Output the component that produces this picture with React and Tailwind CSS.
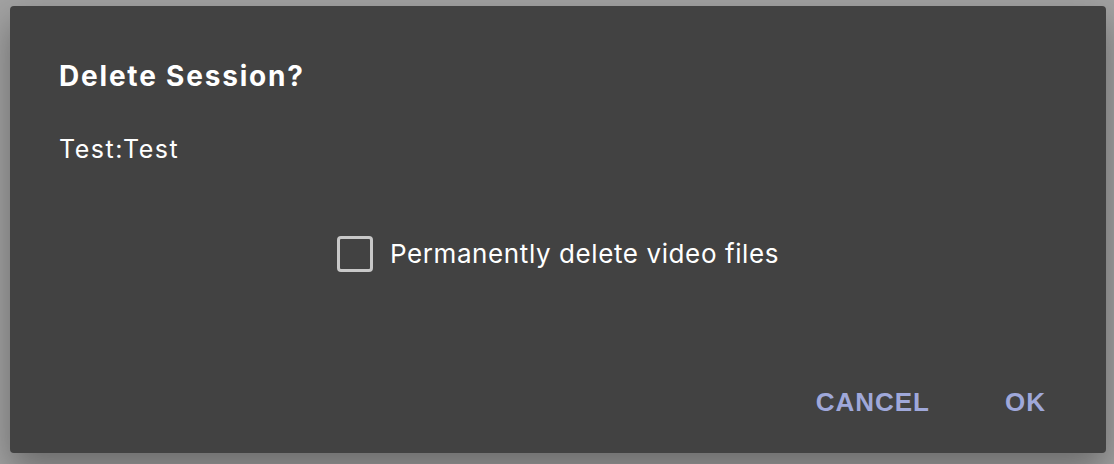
import React, { useState } from 'react';

const App = () => {
  const [checked, setChecked] = useState(false);

  return (
    <div className="w-[1114px] h-[464px] bg-[#a2a2a2] pt-[6px] pl-[10px] overflow-hidden">
      {/* Dialog */}
      <div
        className="w-[1096px] h-[447px] bg-[#424242] rounded-[4px] shadow-[0_16px_36px_rgba(0,0,0,0.35)] flex flex-col text-white"
        style={{ fontFamily: 'Inter, "Noto Sans", sans-serif' }}
      >
        {/* Title */}
        <h2 className="pl-[49px] pt-[50px] text-[28px] font-bold leading-[40px] tracking-[1.8px]">
          Delete Session?
        </h2>

        {/* Content */}
        <div className="pl-[49px] pt-[35px] text-[25px] leading-[36px] tracking-[1.5px]">Test:Test</div>

        <label className="mt-[69px] flex items-center justify-center gap-[17px] cursor-pointer">
          <button
            type="button"
            onClick={() => setChecked(!checked)}
            className="w-[36px] h-[36px] rounded-[4px] border-[3px] border-[#c8c8c8]"
          />
          <span className="text-[26px] leading-[36px] tracking-[0.6px]">Permanently delete video files</span>
        </label>

        {/* Actions */}
        <div
          className="mt-auto mb-[24px] mr-[48px] flex justify-end gap-[63px]"
          style={{ fontFamily: '"Liberation Sans", Arial, sans-serif' }}
        >
          <button className="h-[54px] text-[#9fa8da] text-[26px] font-bold uppercase tracking-[1px]">
            Cancel
          </button>
          <button className="px-[12px] h-[54px] text-[#9fa8da] text-[26px] font-bold uppercase tracking-[1px]">
            OK
          </button>
        </div>
      </div>
    </div>
  );
};

export default App;
